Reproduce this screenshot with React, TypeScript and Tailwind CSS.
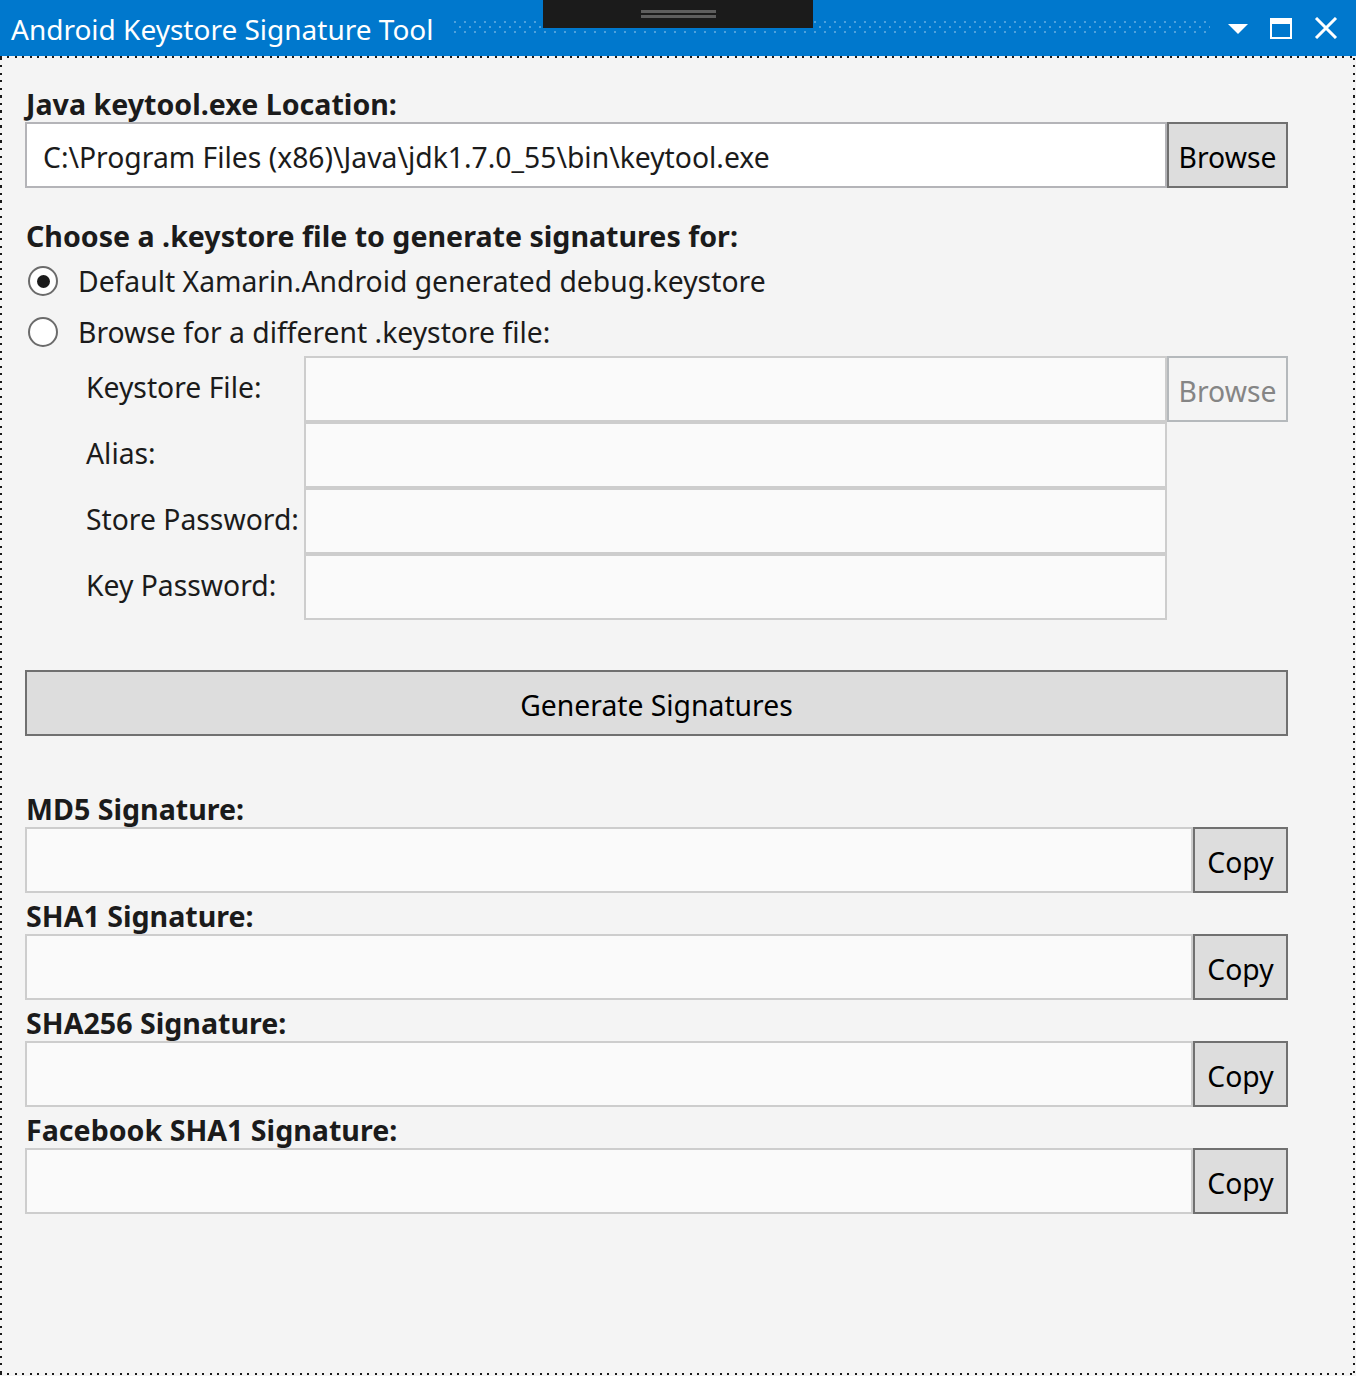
const hDots =
  "bg-[repeating-linear-gradient(to_right,#1a1a1a_0_2px,transparent_2px_7.5px)]";
const vDots =
  "bg-[repeating-linear-gradient(to_bottom,#1a1a1a_0_2px,transparent_2px_7.5px)]";

function TitleBar() {
  return (
    <header className="relative h-[56px] shrink-0 bg-[#0078cd] flex items-center text-white">
      <h1 className="pl-[11px] text-[28px] leading-none font-normal whitespace-nowrap mt-[2px]">
        Android Keystore Signature Tool
      </h1>
      <div className="flex-1 ml-[20px] mr-[18px] h-[13px] -mt-[1px] [background-image:radial-gradient(circle,rgba(255,255,255,0.3)_1px,transparent_1.4px),radial-gradient(circle,rgba(255,255,255,0.3)_1px,transparent_1.4px)] [background-size:10px_10px] [background-position:-4px_-4px,1px_1px]" />
      <div className="flex items-center gap-[22px] pr-[18px]">
        <svg width="20" height="10" viewBox="0 0 20 10" className="mt-[1px]">
          <polygon points="0,0 20,0 10,10" fill="#fff" />
        </svg>
        <svg width="22" height="21" viewBox="0 0 22 21">
          <rect x="1" y="3" width="20" height="17" fill="none" stroke="#fff" strokeWidth="2" />
          <rect x="0" y="0" width="22" height="6" fill="#fff" />
        </svg>
        <svg width="24" height="22" viewBox="0 0 24 22">
          <path d="M2 1 L22 21 M22 1 L2 21" stroke="#fff" strokeWidth="3" />
        </svg>
      </div>
      <div className="absolute left-[543px] top-0 w-[270px] h-[28px] bg-[#1b1b1b] flex flex-col items-center pt-[10px] gap-[2px]">
        <div className="w-[75px] h-[3px] bg-[#5e5e5e]" />
        <div className="w-[75px] h-[3px] bg-[#5e5e5e]" />
      </div>
    </header>
  );
}

function Label({ children }: { children: React.ReactNode }) {
  return (
    <div className="h-[41px] leading-[45px] text-[28.6px] font-bold whitespace-nowrap pl-[1px]">{children}</div>
  );
}

function Button({ children, disabled, className = "" }: { children: React.ReactNode; disabled?: boolean; className?: string }) {
  return (
    <button
      className={
        "h-[66px] border-2 text-[28.3px] pt-[4px] flex items-center justify-center " +
        (disabled ? "bg-[#f4f4f4] border-[#b5b9bc] text-[#858585] " : "bg-[#dddddd] border-[#707070] text-black ") +
        className
      }
    >
      {children}
    </button>
  );
}

function Radio({ checked, label }: { checked?: boolean; label: string }) {
  return (
    <div className="h-[51px] pt-[3px] flex items-center">
      <div className="ml-[3px] w-[30px] h-[30px] rounded-full border-2 border-[#6b6b6b] bg-white flex items-center justify-center">
        {checked && <div className="w-[13px] h-[13px] rounded-full bg-[#1b1b1b]" />}
      </div>
      <span className="ml-[20px] text-[28.3px] leading-none">{label}</span>
    </div>
  );
}

function FormRow({ label, button }: { label: string; button?: boolean }) {
  return (
    <div className="flex h-[66px]">
      <div className="w-[279px] pl-[61px] flex items-center text-[28.3px] pb-[3px]">{label}</div>
      <div className="w-[863px] border-2 border-[#cdcdcd] bg-[#fafafa]" />
      {button && <Button disabled className="w-[121px]">Browse</Button>}
    </div>
  );
}

function Signature({ label }: { label: string }) {
  return (
    <div>
      <Label>{label}</Label>
      <div className="flex h-[66px]">
        <div className="flex-1 border-2 border-[#cdcdcd] bg-[#fafafa]" />
        <Button className="w-[95px]">Copy</Button>
      </div>
    </div>
  );
}

export default function App() {
  return (
    <div className="w-[1356px] h-[1376px] flex flex-col bg-[#f4f4f4] text-[#1b1b1b] font-['Segoe_UI','Noto_Sans',sans-serif]">
      <TitleBar />
      <div className={"h-[2px] shrink-0 " + hDots} />
      <div className="flex-1 flex pr-[1px]">
        <div className={"w-[2px] " + vDots} />
        <main className="flex-1 pl-[23px] pr-[65px] pt-[23px]">
          <Label>Java keytool.exe Location:</Label>
          <div className="flex h-[66px]">
            <div className="flex-1 border-2 border-[#b4b4b8] bg-white flex items-center pl-[16px] pt-[4px] text-[28.3px]">
              C:\Program Files (x86)\Java\jdk1.7.0_55\bin\keytool.exe
            </div>
            <Button className="w-[121px]">Browse</Button>
          </div>

          <div className="mt-[25px]">
            <Label>Choose a .keystore file to generate signatures for:</Label>
          </div>
          <Radio checked label="Default Xamarin.Android generated debug.keystore" />
          <Radio label="Browse for a different .keystore file:" />

          <FormRow label="Keystore File:" button />
          <FormRow label="Alias:" />
          <FormRow label="Store Password:" />
          <FormRow label="Key Password:" />

          <Button className="w-full mt-[50px]">Generate Signatures</Button>

          <div className="mt-[50px]">
            <Signature label="MD5 Signature:" />
            <Signature label="SHA1 Signature:" />
            <Signature label="SHA256 Signature:" />
            <Signature label="Facebook SHA1 Signature:" />
          </div>
        </main>
        <div className={"w-[2px] " + vDots} />
      </div>
      <div className="h-[3px] shrink-0 pb-[1px]">
        <div className={"h-[2px] " + hDots} />
      </div>
    </div>
  );
}
